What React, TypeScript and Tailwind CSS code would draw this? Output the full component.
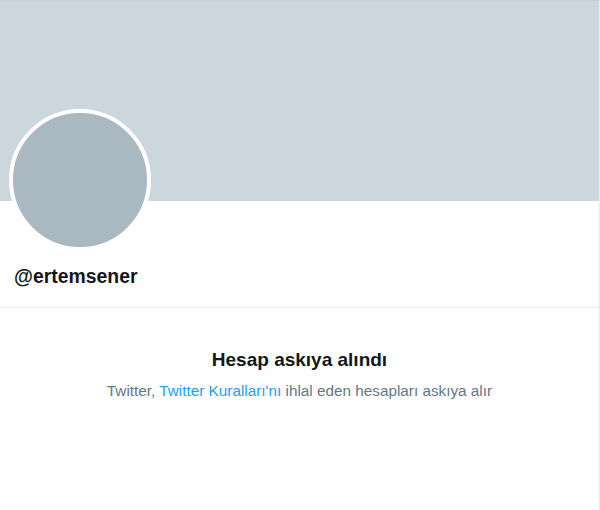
const App = () => {
  return (
    <div
      className="w-[600px] h-[510px] bg-white border-r border-[#e6ecf0]"
      style={{ fontFamily: '"Liberation Sans", Arial, sans-serif' }}
    >
      {/* Banner */}
      <div className="h-[201px] bg-[#ccd6dd] border-t border-[#c4ced6]" />

      {/* Profile header */}
      <div className="px-[9px] pb-[18px] border-b border-[#e6ecf0]">
        <div className="-mt-[92px] w-[142px] h-[142px] rounded-full border-4 border-white bg-[#aab8c2]" />
        <div className="mt-[13px] pl-[5px] text-[19.4px] leading-[25px] font-bold text-[#14171a]">
          @ertemsener
        </div>
      </div>

      {/* Suspended notice */}
      <div className="pt-[39px] flex flex-col items-center text-center">
        <h2 className="text-[19px] leading-[25px] font-bold text-[#14171a]">Hesap askıya alındı</h2>
        <p className="mt-[9px] text-[15.3px] leading-[20px] text-[#657786]">
          Twitter, <span className="text-[#1da1f2]">Twitter Kuralları'nı</span> ihlal eden hesapları askıya alır
        </p>
      </div>
    </div>
  );
};

export default App;
